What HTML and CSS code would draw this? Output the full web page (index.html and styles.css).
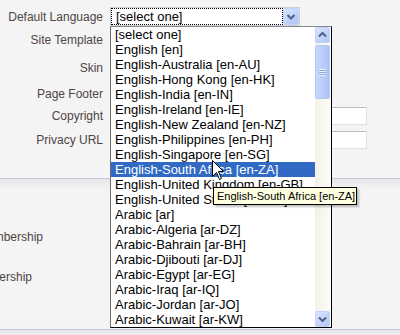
FILE: index.html
```html
<!DOCTYPE html>
<html lang="en">
<head>
    <meta charset="UTF-8">
    <title>Site Settings</title>
    <link rel="stylesheet" href="styles.css">
</head>
<body>
    <div class="pagina">
        <div class="grupo">
            <div class="linha l1">
                <label class="rotulo">Default Language</label>
                <div class="combo">
                    <span class="foco">[select one]</span>
                    <span class="botao-seta">
                        <svg width="16" height="17" viewBox="0 0 16 17"><path d="M4.5 7 L8 10.5 L11.5 7" fill="none" stroke="#4d6185" stroke-width="2"/></svg>
                    </span>
                </div>
            </div>
            <div class="linha l2"><label class="rotulo">Site Template</label></div>
            <div class="linha l3"><label class="rotulo">Skin</label></div>
            <div class="linha l4"><label class="rotulo">Page Footer</label></div>
            <div class="linha l5"><label class="rotulo">Copyright</label><input class="campo" type="text"></div>
            <div class="linha l6"><label class="rotulo">Privacy URL</label><input class="campo" type="text"></div>
        </div>
        <div class="grupo2">
            <div class="linha2"><span class="rotulo2">Membership</span></div>
            <div class="linha2 segunda"><span class="rotulo2">Ownership</span></div>
        </div>
        <div class="grupo3"></div>

        <div class="lista">
            <ul class="itens">
                <li>[select one]</li>
                <li>English [en]</li>
                <li>English-Australia [en-AU]</li>
                <li>English-Hong Kong [en-HK]</li>
                <li>English-India [en-IN]</li>
                <li>English-Ireland [en-IE]</li>
                <li>English-New Zealand [en-NZ]</li>
                <li>English-Philippines [en-PH]</li>
                <li>English-Singapore [en-SG]</li>
                <li class="ativo">English-South Africa [en-ZA]</li>
                <li>English-United Kingdom [en-GB]</li>
                <li>English-United States [en-US]</li>
                <li>Arabic [ar]</li>
                <li>Arabic-Algeria [ar-DZ]</li>
                <li>Arabic-Bahrain [ar-BH]</li>
                <li>Arabic-Djibouti [ar-DJ]</li>
                <li>Arabic-Egypt [ar-EG]</li>
                <li>Arabic-Iraq [ar-IQ]</li>
                <li>Arabic-Jordan [ar-JO]</li>
                <li>Arabic-Kuwait [ar-KW]</li>
            </ul>
            <div class="rolagem">
                <span class="sb-botao">
                    <svg width="15" height="16" viewBox="0 0 15 16"><path d="M4 9.5 L7.5 6 L11 9.5" fill="none" stroke="#4d6185" stroke-width="2"/></svg>
                </span>
                <span class="polegar"><span class="grip"></span></span>
                <span class="trilho"></span>
                <span class="sb-botao">
                    <svg width="15" height="16" viewBox="0 0 15 16"><path d="M4 6.5 L7.5 10 L11 6.5" fill="none" stroke="#4d6185" stroke-width="2"/></svg>
                </span>
            </div>
        </div>

        <div class="dica">English-South Africa [en-ZA]</div>

        <svg class="cursor" width="13" height="21" viewBox="0 0 13 21">
            <path d="M0.5 0.5 L0.5 16.5 L4.5 12.5 L7.5 19.5 L9.5 18.5 L6.5 11.5 L11.5 11.5 Z" fill="#fff" stroke="#000" stroke-width="1"/>
        </svg>
    </div>
</body>
</html>
```

FILE: styles.css
```css
* {
    margin: 0;
    padding: 0;
    box-sizing: border-box;
}
body {
    background-color: #f4f4f4;
    font-family: "Liberation Sans", Arial, sans-serif;
    overflow: hidden;
}
.pagina {
    position: relative;
    width: 400px;
    height: 335px;
}
.grupo {
    padding-top: 7px;
    padding-bottom: 28px;
}
.linha {
    display: flex;
    align-items: center;
    gap: 7px;
}
.l1 { height: 19px; }
.l2 { height: 28px; }
.l3 { height: 28px; }
.l4 { height: 24px; }
.l5 { height: 20px; }
.l6 { height: 20px; margin-top: 4px; }
.rotulo {
    width: 103px;
    flex-shrink: 0;
    text-align: right;
    font-size: 12px;
    color: #4f4444;
}
.combo {
    display: flex;
    width: 190px;
    height: 19px;
    border: 1px solid #c9cfd8;
    background-color: #fff;
}
.foco {
    width: 172px;
    height: 17px;
    border: 1px dotted #000;
    padding-left: 4px;
    font-size: 13px;
    line-height: 15px;
    color: #000;
}
.botao-seta {
    width: 16px;
    height: 17px;
    border: 1px solid #c4d3fb;
    border-radius: 2px;
    background: linear-gradient(135deg, #d9e4fe, #aec2f6);
}
.botao-seta svg {
    display: block;
    margin: -1px 0 0 -1px;
}
.campo {
    width: 257px;
    height: 18px;
    border: 1px solid #dde0e5;
    border-top-color: #b7bdc5;
    background-color: #fff;
}
.grupo2 {
    border-top: 1px solid #c8c8dd;
    background: linear-gradient(#e6e6e9, #f4f4f4 10px);
    padding-top: 48px;
    height: 151px;
}
.linha2 {
    display: flex;
    height: 20px;
    width: 43px;
    justify-content: flex-end;
    align-items: center;
}
.segunda {
    width: 32px;
    margin-top: 20px;
}
.rotulo2 {
    white-space: nowrap;
    font-size: 12px;
    color: #4f4444;
}
.grupo3 {
    border-top: 1px solid #c8c8dd;
    background: linear-gradient(#e6e6e9, #f4f4f4 8px);
    height: 6px;
}
.lista {
    position: absolute;
    left: 110px;
    top: 26px;
    width: 222px;
    height: 302px;
    display: flex;
    background-color: #fff;
    border: 1px solid #000;
    border-top-color: #8a8a8a;
    border-left-color: #6e6e6e;
}
.itens {
    list-style: none;
    width: 204px;
}
.itens li {
    height: 15px;
    line-height: 15px;
    padding-left: 4px;
    font-size: 13px;
    color: #000;
    white-space: nowrap;
    overflow: hidden;
}
.itens li.ativo {
    background-color: #316ac5;
    color: #fff;
}
.rolagem {
    width: 16px;
    display: flex;
    flex-direction: column;
    background: linear-gradient(90deg, #f3f1e7, #fdfdfa);
}
.sb-botao {
    height: 16px;
    width: 15px;
    border: 1px solid #c2d2fb;
    border-radius: 2px;
    background: linear-gradient(135deg, #dbe5fe, #b0c4f7);
}
.sb-botao svg {
    display: block;
    margin: -1px 0 0 -1px;
}
.polegar {
    margin-top: 2px;
    height: 54px;
    width: 15px;
    border: 1px solid #b5c8f7;
    border-radius: 2px;
    background: linear-gradient(90deg, #c9d7fc, #b9cbfa 60%, #aec2f6);
    display: flex;
    align-items: center;
    justify-content: center;
}
.grip {
    width: 7px;
    height: 7px;
    background: repeating-linear-gradient(#eef3ff 0 1px, #8ea6e3 1px 2px);
}
.trilho {
    flex: 1;
}
.dica {
    position: absolute;
    left: 213px;
    top: 187px;
    width: 144px;
    height: 18px;
    border: 1px solid #000;
    background-color: #ffffe1;
    box-shadow: 2px 2px 2px rgba(0, 0, 0, 0.25);
    font-size: 11px;
    line-height: 16px;
    padding-left: 3px;
    color: #000;
    white-space: nowrap;
}
.cursor {
    position: absolute;
    left: 212px;
    top: 160px;
}
```
